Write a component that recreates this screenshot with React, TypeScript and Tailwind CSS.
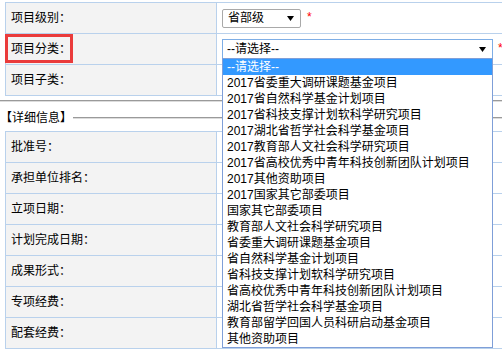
import React from "react";

const items = [
  "2017省委重大调研课题基金项目",
  "2017省自然科学基金计划项目",
  "2017省科技支撑计划软科学研究项目",
  "2017湖北省哲学社会科学基金项目",
  "2017教育部人文社会科学研究项目",
  "2017省高校优秀中青年科技创新团队计划项目",
  "2017其他资助项目",
  "2017国家其它部委项目",
  "国家其它部委项目",
  "教育部人文社会科学研究项目",
  "省委重大调研课题基金项目",
  "省自然科学基金计划项目",
  "省科技支撑计划软科学研究项目",
  "省高校优秀中青年科技创新团队计划项目",
  "湖北省哲学社会科学基金项目",
  "教育部留学回国人员科研启动基金项目",
  "其他资助项目",
];

function Arrow() {
  return (
    <svg width="7" height="5" viewBox="0 0 7 5" className="shrink-0">
      <path d="M0 0 H7 L3.5 5 Z" fill="#000" />
    </svg>
  );
}

function Row({
  label,
  children,
  first,
}: {
  label: string;
  children?: React.ReactNode;
  first?: boolean;
}) {
  return (
    <div
      className={
        first
          ? "flex h-[32px] border-t border-b border-[#b9d1ec]"
          : "flex h-[31px] border-b border-[#b9d1ec]"
      }
    >
      <div className="w-[211px] shrink-0 bg-[#f3f3f3] border-r border-[#b9d1ec] pl-[5px] flex items-center">
        {label}
      </div>
      <div className="flex-1 flex items-center pl-[5px]">{children}</div>
    </div>
  );
}

function Star() {
  return <span className="text-[#ff0000] text-[12px] leading-none -mt-[2px]">*</span>;
}

export default function App() {
  return (
    <div className="relative w-[502px] h-[354px] overflow-hidden bg-white text-black text-[12px] font-['Liberation_Sans','Noto_Sans_CJK_SC',sans-serif]">
      <div className="pt-[2px]">
        <div className="ml-[5px] border-l border-[#b9d1ec]">
          <Row label="项目级别：" first>
            <div className="w-[79px] h-[19px] border border-[#a9a9a9] rounded-[2px] bg-white flex items-center justify-between pl-[5px] pr-[6px]">
              <span>省部级</span>
              <Arrow />
            </div>
            <span className="ml-[6px] flex items-center">
              <Star />
            </span>
          </Row>
          <Row label="项目分类：">
            <div className="w-[271px] h-[20px] border border-[#7eaee6] bg-white flex items-center justify-between pl-[4px] pr-[6px]">
              <span>--请选择--</span>
              <Arrow />
            </div>
            <span className="ml-[5px] flex items-center">
              <Star />
            </span>
          </Row>
          <Row label="项目子类：" />
        </div>
      </div>

      <div className="mt-[4px]">
        <div className="h-[1px] bg-[#9a9a9a]" />
        <div className="h-[1px] bg-[#dcdcdc]" />
      </div>

      <div className="mt-[9px] h-[14px] flex items-center">
        <span className="leading-[14px] whitespace-nowrap">【详细信息】</span>
        <div className="flex-1 ml-[1px]">
          <div className="h-[1px] bg-[#9a9a9a]" />
          <div className="h-[1px] bg-[#dcdcdc]" />
        </div>
      </div>

      <div className="mt-[6px] ml-[5px] border-l border-[#b9d1ec]">
        <Row label="批准号：" first />
        <Row label="承担单位排名：" />
        <Row label="立项日期：" />
        <Row label="计划完成日期：" />
        <Row label="成果形式：" />
        <Row label="专项经费：" />
        <Row label="配套经费：" />
      </div>

      <div className="absolute left-[5px] top-[34px] w-[68px] h-[29px] border-[3px] border-[#ea3b3b]" />

      <div className="absolute left-[222px] top-[58px] w-[271px] border border-[#7f9fd8] bg-white">
        <div className="h-[16px] leading-[16px] pl-[4px] bg-[#3399ff] text-white whitespace-nowrap">
          --请选择--
        </div>
        {items.map((t) => (
          <div key={t} className="h-[16px] leading-[16px] pl-[4px] whitespace-nowrap">
            {t}
          </div>
        ))}
      </div>
    </div>
  );
}
